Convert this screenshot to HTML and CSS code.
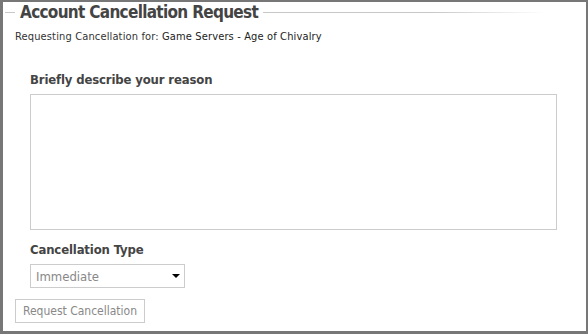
FILE: index.html
```html
<!DOCTYPE html>
<html lang="en">

<head>
  <meta charset="UTF-8" />
  <title>Account Cancellation Request</title>
  <link rel="stylesheet" href="styles.css">
</head>

<body>
  <div class="frame">
    <div class="legend">
      <span class="rule rule-short"></span>
      <h1>Account Cancellation Request</h1>
      <span class="rule rule-long"></span>
    </div>

    <p class="subject">Requesting Cancellation for: <strong>Game Servers - Age of Chivalry</strong></p>

    <form class="cancel-form">
      <div class="field">
        <label for="reason">Briefly describe your reason</label>
        <textarea id="reason"></textarea>
      </div>

      <div class="field">
        <label for="type">Cancellation Type</label>
        <div class="select-wrap">
          <select id="type">
            <option>Immediate</option>
            <option>End of Billing Period</option>
          </select>
        </div>
      </div>

      <button type="button" class="submit">Request Cancellation</button>
    </form>
  </div>
</body>

</html>
```

FILE: styles.css
```css
* {
  box-sizing: border-box;
}

body {
  margin: 0;
  font-family: 'DejaVu Sans Condensed', 'DejaVu Sans', Tahoma, sans-serif;
  color: #333;
  background: #fff;
}

.frame {
  width: 588px;
  height: 334px;
  border: 2px solid #777;
  border-left-width: 3px;
  border-bottom-width: 3px;
  padding: 0 12px;
  background: #fff;
}

.legend {
  display: flex;
  align-items: center;
  gap: 5px;
  margin-left: -10px;
  height: 20px;
}

.rule {
  height: 1px;
  background: #c8c8c8;
  flex-shrink: 0;
}

.rule-short {
  width: 10px;
}

.rule-long {
  width: 283px;
  background: linear-gradient(to right, #c8c8c8 60%, rgba(200, 200, 200, 0));
}

h1 {
  margin: 0;
  font-size: 17px;
  line-height: 20px;
  letter-spacing: -0.7px;
  font-weight: bold;
  color: #444;
  white-space: nowrap;
}

.subject {
  margin: 8px 0 0;
  font-size: 11px;
  line-height: 14px;
  letter-spacing: 0.14px;
}

.subject strong {
  font-weight: normal;
  color: #222;
}

.cancel-form {
  margin-top: 28px;
}

.field {
  padding-left: 15px;
  display: flex;
  flex-direction: column;
  align-items: flex-start;
}

.field + .field {
  margin-top: 12px;
}

label {
  font-size: 13px;
  line-height: 16px;
  letter-spacing: -0.15px;
  font-weight: bold;
  color: #444;
  margin-bottom: 6px;
}

textarea {
  width: 527px;
  height: 136px;
  border: 1px solid #ccc;
  resize: none;
  margin: 0;
}

.select-wrap {
  position: relative;
}

.select-wrap::after {
  content: '';
  position: absolute;
  right: 5px;
  top: 10px;
  border-left: 4px solid transparent;
  border-right: 4px solid transparent;
  border-top: 4px solid #000;
}

select {
  appearance: none;
  width: 155px;
  height: 24px;
  border: 1px solid #ccc;
  border-radius: 0;
  background: #fff;
  color: #888;
  font-family: inherit;
  font-size: 13px;
  padding: 0 5px;
  margin: 0;
}

.submit {
  margin-top: 11px;
  width: 130px;
  height: 24px;
  border: 1px solid #ccc;
  background: #fff;
  color: #888;
  font-family: inherit;
  font-size: 12px;
  padding: 0;
}
```
